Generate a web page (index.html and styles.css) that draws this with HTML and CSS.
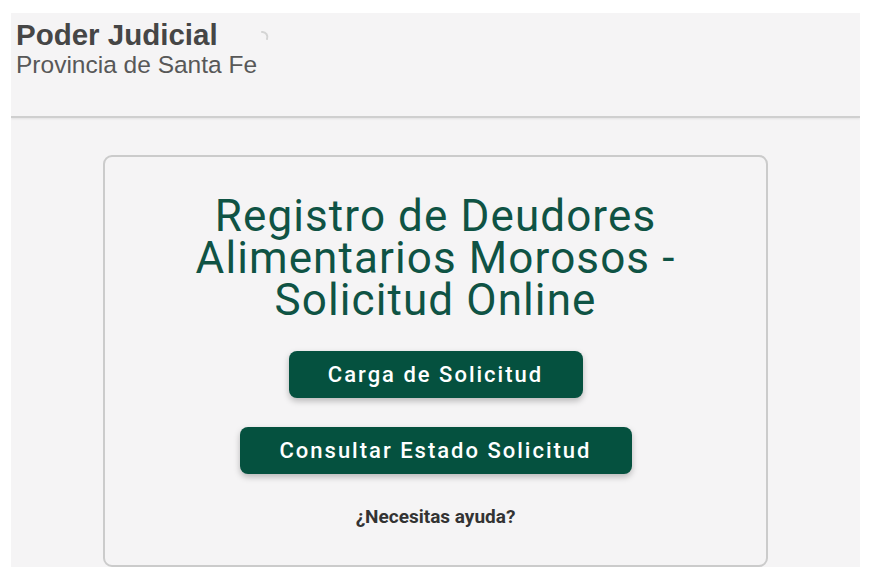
FILE: index.html
```html
<!DOCTYPE html>
<html lang="es">
<head>
<meta charset="utf-8">
<title>Registro de Deudores Alimentarios Morosos</title>
<link rel="stylesheet" href="styles.css">
</head>
<body>
<div class="frame">
  <header class="header">
    <div class="brand">
      <div class="brand-title">Poder Judicial</div>
      <div class="brand-sub">Provincia de Santa Fe</div>
    </div>
    <svg class="spinner" width="12" height="14" viewBox="0 0 12 14"><path d="M3 2 A5 5 0 0 1 8 9" fill="none" stroke="#d4d4d4" stroke-width="2" stroke-linecap="round"/></svg>
  </header>
  <main class="main">
    <section class="card">
      <h1 class="title">Registro de Deudores<br>Alimentarios Morosos -<br>Solicitud Online</h1>
      <div class="actions">
        <button class="btn btn-carga">Carga de Solicitud</button>
        <button class="btn btn-consulta">Consultar Estado Solicitud</button>
      </div>
      <a class="help">¿Necesitas ayuda?</a>
    </section>
  </main>
</div>
</body>
</html>
```
FILE: styles.css
```css
html, body {
  margin: 0;
  padding: 0;
  background: #ffffff;
}
.frame {
  margin: 13px 0 0 11px;
  width: 849px;
  height: 554px;
  background: #f5f4f5;
  overflow: hidden;
  display: flex;
  flex-direction: column;
}
.header {
  flex-shrink: 0;
  height: 105px;
  box-sizing: border-box;
  padding: 5px 0 0 5px;
  display: flex;
  align-items: flex-start;
  border-bottom: 2px solid #cfcfcf;
  box-shadow: 0 1px 2px rgba(0,0,0,0.08);
  font-family: "Liberation Sans", Arial, sans-serif;
}
.brand-title {
  font-size: 29.5px;
  font-weight: bold;
  color: #464646;
  line-height: 34px;
}
.brand-sub {
  font-size: 24.5px;
  color: #585858;
  line-height: 26px;
}
.spinner {
  margin: 12px 0 0 2px;
}
.main {
  flex: 1;
  display: flex;
  justify-content: flex-start;
  padding: 37px 0 0 92px;
}
.card {
  flex-shrink: 0;
  width: 665px;
  height: 412px;
  box-sizing: border-box;
  border: 2px solid #cbcbcb;
  border-radius: 9px;
  display: flex;
  flex-direction: column;
  align-items: center;
  padding-top: 38px;
  font-family: Roboto, "Noto Sans", sans-serif;
}
.title {
  margin: 0;
  font-size: 44px;
  line-height: 42px;
  letter-spacing: 1.1px;
  font-weight: 400;
  color: #0f5344;
  text-align: center;
}
.actions {
  margin-top: 30px;
  display: flex;
  flex-direction: column;
  align-items: center;
  gap: 29px;
}
.btn {
  border: none;
  border-radius: 8px;
  background: #05513f;
  color: #ffffff;
  font-family: Roboto, "Noto Sans", sans-serif;
  font-size: 22px;
  font-weight: 500;
  letter-spacing: 2px;
  height: 47px;
  padding: 0;
  box-shadow: 0 3px 6px rgba(0,0,0,0.25);
}
.btn-carga {
  width: 294px;
}
.btn-consulta {
  width: 392px;
}
.help {
  margin-top: 31px;
  font-size: 19px;
  font-weight: 700;
  color: #333333;
  line-height: 24px;
}
```
